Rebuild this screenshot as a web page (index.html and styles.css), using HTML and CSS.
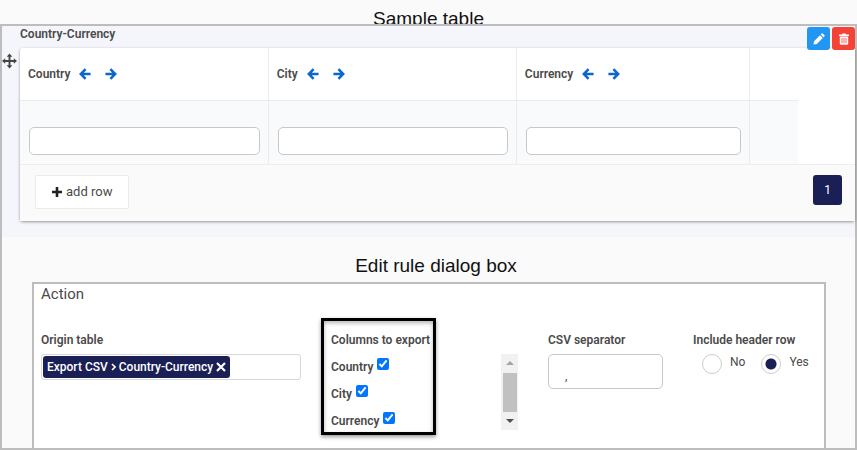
FILE: index.html
```html
<!DOCTYPE html>
<html lang="en">
<head>
<meta charset="utf-8">
<title>Export CSV</title>
<link rel="stylesheet" href="styles.css">
</head>
<body>
<svg class="defs" aria-hidden="true">
  <symbol id="arrow-left" viewBox="0 0 12 12"><path d="M6.6 1.2 1.8 6l4.8 4.800M2 6h9.600" fill="none" stroke="currentColor" stroke-width="2.5"/></symbol>
  <symbol id="arrow-right" viewBox="0 0 12 12"><path d="M5.4 1.2 10.2 6l-4.800 4.800M10 6H.4" fill="none" stroke="currentColor" stroke-width="2.5"/></symbol>
</svg>

<h1 class="caption caption-top">Sample table</h1>
<main class="frame">
  <section class="sample">
    <svg class="move" viewBox="0 0 16 16" aria-hidden="true"><path d="M8 2v12M2 8h12" stroke="currentColor" stroke-width="2"/><path d="M8 0l3 3.400H5zM8 16l3-3.400H5zM0 8l3.400-3v6zM16 8l-3.400-3v6z" fill="currentColor"/></svg>
    <div class="sample-body">
      <h2 class="sample-title">Country-Currency</h2>
      <div class="card">
        <table class="grid">
          <colgroup><col class="col-wide"><col class="col-wide"><col class="col-mid"><col></colgroup>
          <thead>
            <tr>
              <th><div class="head"><span>Country</span><button aria-label="Move Country left"><svg><use href="#arrow-left"/></svg></button><button aria-label="Move Country right"><svg><use href="#arrow-right"/></svg></button></div></th>
              <th><div class="head"><span>City</span><button aria-label="Move City left"><svg><use href="#arrow-left"/></svg></button><button aria-label="Move City right"><svg><use href="#arrow-right"/></svg></button></div></th>
              <th><div class="head"><span>Currency</span><button aria-label="Move Currency left"><svg><use href="#arrow-left"/></svg></button><button aria-label="Move Currency right"><svg><use href="#arrow-right"/></svg></button></div></th>
              <th></th>
            </tr>
          </thead>
          <tbody>
            <tr>
              <td><input type="text" aria-label="Country"></td>
              <td><input type="text" aria-label="City"></td>
              <td><input type="text" aria-label="Currency"></td>
              <td></td>
            </tr>
          </tbody>
        </table>
        <div class="card-foot">
          <button class="add"><svg viewBox="0 0 10 10" aria-hidden="true"><path d="M5 0v10M0 5h10" stroke="currentColor" stroke-width="2.600"/></svg>add row</button>
          <button class="page">1</button>
        </div>
      </div>
    </div>
    <div class="tools">
      <button class="tool edit" aria-label="Edit"><svg viewBox="0 0 12 12"><path d="M.5 11.500 1 8.200 7 2.200 9.800 5l-6 6zM7.700 1.500 8.700.500q.5-.5 1 0L11.500 2.300q.5.5 0 1L10.500 4.300z" fill="#fff"/></svg></button>
      <button class="tool remove" aria-label="Delete"><svg viewBox="0 0 12 12"><path d="M1 1.500h3L4.600.400h2.800L8 1.500h3V3H1zM1.800 3.600h8.400V10.500q0 1.200-1.200 1.200H3q-1.200 0-1.200-1.200z" fill="#fff"/><path d="M4 5v5.200M6 5v5.200M8 5v5.200" stroke="#f44336" stroke-width=".8"/></svg></button>
    </div>
  </section>

  <h1 class="caption caption-dialog">Edit rule dialog box</h1>
  <section class="dialog">
    <h2 class="dialog-title">Action</h2>
    <form class="fields">
      <div class="field">
        <label class="label" for="origin">Origin table</label>
        <div class="picker">
          <span class="tag">Export CSV <svg class="chevron" viewBox="0 0 5 8" aria-hidden="true"><path d="M1 1l3 3-3 3" fill="none" stroke="currentColor" stroke-width="1.600"/></svg> Country-Currency <button type="button" aria-label="Remove"><svg viewBox="0 0 10 10"><path d="M1 1l8 8M9 1 1 9" stroke="currentColor" stroke-width="2.200"/></svg></button></span>
          <input id="origin" type="text">
        </div>
      </div>
      <div class="field columns">
        <div class="highlight">
          <span class="label">Columns to export</span>
          <label class="check">Country <input type="checkbox" checked></label>
          <label class="check">City <input type="checkbox" checked></label>
          <label class="check">Currency <input type="checkbox" checked></label>
        </div>
        <div class="scroll" aria-hidden="true">
          <svg viewBox="0 0 8 4"><path d="M0 4h8L4 0z" fill="#a3a3a3"/></svg>
          <span class="thumb"></span>
          <svg viewBox="0 0 8 4"><path d="M0 0h8L4 4z" fill="#505050"/></svg>
        </div>
      </div>
      <div class="field">
        <label class="label" for="separator">CSV separator</label>
        <input class="separator" id="separator" type="text" value=",">
      </div>
      <div class="field" role="radiogroup" aria-labelledby="header-row">
        <span class="label" id="header-row">Include header row</span>
        <div class="radios">
          <label><input type="radio" name="header">No</label>
          <label><input type="radio" name="header" checked>Yes</label>
        </div>
      </div>
    </form>
  </section>
</main>
</body>
</html>
```
FILE: styles.css
```css
* { box-sizing: border-box; }

body {
  margin: 0;
  min-height: 100vh;
  display: flex;
  flex-direction: column;
  background: #fafafa;
  color: #4a4a4a;
  font: 12px/16px Roboto, sans-serif;
}

button, input { font: inherit; color: inherit; }
button { padding: 0; border: 0; background: none; }
h1, h2 { margin: 0; font-weight: 500; }
.defs { display: none; }

.caption {
  color: #111;
  font: 19px/24px "Liberation Sans", sans-serif;
  text-align: center;
}
.caption-top { height: 24px; padding-top: 7px; }
.caption-dialog { padding: 17px 15px 4px 30px; }

.frame {
  position: relative;
  flex: 1;
  display: flex;
  flex-direction: column;
  border: 2px solid #bdbdbd;
}

.sample {
  position: relative;
  display: flex;
  gap: 3px;
  padding-bottom: 16px;
  background: #f4f6fb;
}
.move { width: 15px; height: 16px; margin-top: 27px; color: #444; }
.sample-body { flex: 1; min-width: 0; }
.sample-title { font-size: 12px; line-height: 16px; padding-bottom: 6px; font-weight: 600; }

.card {
  background: #fff;
  border-radius: 3px;
  box-shadow: 0 1px 3px rgba(0, 0, 0, .4);
}
.grid {
  width: calc(100% - 57px);
  border-collapse: collapse;
  table-layout: fixed;
}
.col-wide { width: 31.9%; }
.col-mid { width: 30%; }
.grid th, .grid td { padding: 0 8px; border: 0 solid #ececee; text-align: left; }
.grid th + th, .grid td + td { border-left-width: 1px; }
.grid th { height: 52px; border-bottom-width: 1px; font-weight: 600; }
.grid td { height: 64px; padding: 18px 8px 0 9px; background: #f9fafc; }
.head { display: flex; align-items: center; gap: 14px; }
.head span { margin-right: -5px; }
.head button { height: 12px; color: #0b67cd; }
.head svg { display: block; width: 12px; height: 12px; }
.grid input {
  display: block;
  width: 100%;
  height: 28px;
  border: 1px solid #c8c8c8;
  border-radius: 5px;
  background: #fff;
}

.card-foot {
  display: flex;
  justify-content: space-between;
  align-items: flex-start;
  padding: 10px 13px 12px 15px;
  border-top: 1px solid #eee;
  background: #fafafa;
}
.add {
  display: flex;
  align-items: center;
  gap: 4px;
  height: 34px;
  padding: 0 16px;
  border: 1px solid #ebebeb;
  border-radius: 2px;
  background: #fff;
  font-size: 13px;
}
.add svg { width: 10px; height: 10px; color: #222; }
.page {
  width: 29px;
  height: 30px;
  border-radius: 3px;
  background: #1a1f56;
  color: #fff;
}

.tools { position: absolute; top: 1px; right: 0; display: flex; gap: 2px; }
.tool { display: grid; place-items: center; width: 23px; height: 23px; border-radius: 3px; }
.tool svg { width: 12px; height: 12px; }
.edit { background: #2196f3; }
.remove { background: #f44336; }

.dialog {
  flex: 1;
  margin: 0 29px 0 30px;
  padding: 0 9px 0 7px;
  border: 2px solid #bdbdbd;
  border-bottom: 0;
  background: #fff;
}
.dialog-title { padding-bottom: 28px; font-size: 15px; line-height: 20px; font-weight: 400; }

.fields {
  display: grid;
  grid-template-columns: minmax(0, 260fr) minmax(0, 187fr) minmax(0, 115fr) minmax(0, 122fr);
  gap: 30px;
}
.label { display: block; padding-bottom: 6px; font-weight: 600; white-space: nowrap; }

.picker {
  display: flex;
  height: 26px;
  border: 1px solid #d8d8d8;
  border-radius: 3px;
}
.picker input { flex: 1; min-width: 0; border: 0; background: none; }
.tag {
  display: flex;
  align-items: center;
  gap: 3px;
  margin: 1px;
  padding: 0 4px;
  border-radius: 3px;
  background: #1a1f56;
  color: #fff;
  font-weight: 500;
  white-space: nowrap;
}
.tag button { height: 10px; color: #fff; }
.tag button svg { display: block; width: 10px; height: 10px; }
.chevron { width: 5px; height: 8px; }

.columns { display: flex; justify-content: space-between; align-items: flex-start; }
.highlight { position: relative; white-space: nowrap; }
.highlight .label { padding-bottom: 5px; }
.highlight::before {
  content: "";
  position: absolute;
  inset: -14px -6px -1px -10px;
  border: 3px solid #000;
  box-shadow: 0 2px 4px rgba(0, 0, 0, .4), inset 0 2px 4px rgba(0, 0, 0, .3);
  pointer-events: none;
}
.check { display: flex; align-items: center; gap: 4px; height: 27px; font-weight: 600; }
.check input { width: 12px; height: 12px; margin: 0 0 5px; accent-color: #0075ff; }
.scroll {
  display: flex;
  flex-direction: column;
  align-items: center;
  justify-content: space-between;
  width: 17px;
  height: 76px;
  margin-top: 22px;
  padding: 7px 0;
  background: #f1f1f1;
}
.scroll svg { width: 8px; height: 4px; }
.thumb { width: 14px; height: 39px; background: #c1c1c1; }

.separator {
  display: block;
  width: 100%;
  height: 35px;
  padding: 8px 16px 0;
  border: 1px solid #c8c8c8;
  border-radius: 5px;
}

.radios { display: flex; gap: 16px; padding-left: 9px; }
.radios label { display: flex; gap: 8px; }
.radios input {
  appearance: none;
  width: 20px;
  height: 20px;
  margin: 0;
  border: 1px solid #ccc;
  border-radius: 50%;
}
.radios input:checked { background: radial-gradient(circle, #1a1f56 5px, #fff 6px); }
```
